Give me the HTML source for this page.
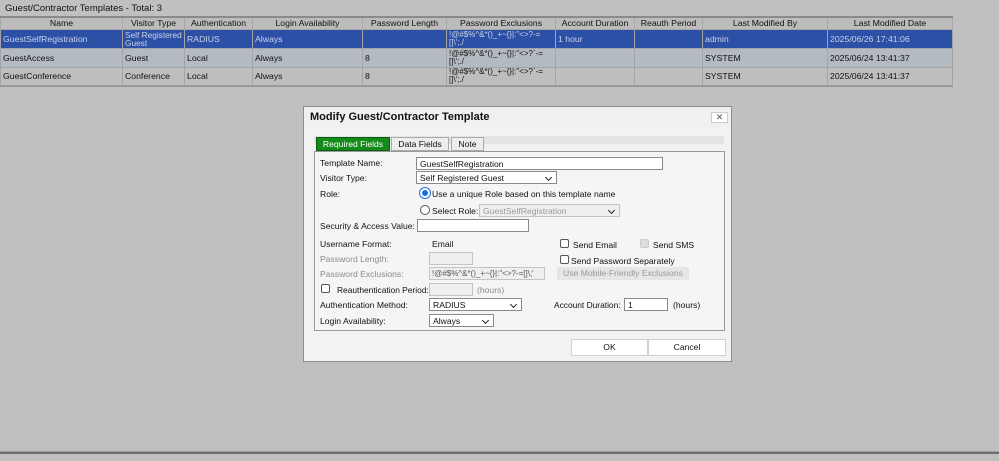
<!DOCTYPE html>
<html><head><style>
*{box-sizing:border-box;margin:0;padding:0}
body{width:999px;height:461px;background:#c0c0c0;font-family:"Liberation Sans",Arial,sans-serif;font-size:9px;color:#111;position:relative;overflow:hidden}
.a{position:absolute;white-space:nowrap}
table{position:absolute;left:0;top:16px;border-collapse:collapse;table-layout:fixed;width:952px;border-top:2px solid #8a8a8a;border-bottom:2px solid #9a9a9a}
td,th{border:1px solid #a4a4a4;font-weight:normal;padding:0 2px;text-align:left;vertical-align:middle;line-height:8px;overflow:hidden;white-space:nowrap;font-size:8.7px}
th{background:#bcbcbc;text-align:center;height:12px;border-color:#a8a8a8;line-height:10px}
tr.s td{background:#2c50a6;color:#c9d3ea}
tr.g td{background:#b4bac2}
tr.h td{background:#bebebe}
tr.s,tr.g,tr.h{height:19px}
.ex{font-size:8px;line-height:8px}
.dlg{position:absolute;left:303px;top:106px;width:429px;height:256px;background:#f2f2f2;border:1px solid #8e8e8e;font-size:8.6px}
.inp{position:absolute;background:#fff;border:1px solid #8a8a8a;height:13px;padding:1px 3px;line-height:10px;white-space:nowrap;overflow:hidden}
.dis{background:#efefef;border-color:#c4c4c4;color:#888}
.sel:after{content:"";position:absolute;right:5px;top:3px;width:4px;height:4px;border-right:1.5px solid #222;border-bottom:1.5px solid #222;transform:rotate(45deg)}
.cb{position:absolute;width:9px;height:9px;border:1px solid #555;background:#fff;border-radius:2px}
.gr{color:#8a8a8a}
.btn{position:absolute;background:#fff;border:1px solid #d0d0d0;text-align:center;line-height:15px;height:17px}
</style></head><body>
<div class="a" style="left:5px;top:3px;font-size:9.5px">Guest/Contractor Templates - Total: 3</div>
<table>
<colgroup><col style="width:122px"><col style="width:62px"><col style="width:68px"><col style="width:110px"><col style="width:84px"><col style="width:109px"><col style="width:79px"><col style="width:68px"><col style="width:125px"><col style="width:125px"></colgroup>
<tr><th>Name</th><th>Visitor Type</th><th>Authentication</th><th>Login Availability</th><th>Password Length</th><th>Password Exclusions</th><th>Account Duration</th><th>Reauth Period</th><th>Last Modified By</th><th>Last Modified Date</th></tr>
<tr class="s"><td>GuestSelfRegistration</td><td style="font-size:8.3px">Self Registered<br>Guest</td><td>RADIUS</td><td>Always</td><td></td><td class="ex">!@#$%^&amp;*()_+~{}|:"&lt;&gt;?-=<br>[]\';./</td><td>1 hour</td><td></td><td>admin</td><td>2025/06/26 17:41:06</td></tr>
<tr class="g"><td>GuestAccess</td><td>Guest</td><td>Local</td><td>Always</td><td>8</td><td class="ex">!@#$%^&amp;*()_+~{}|:"&lt;&gt;?`-=<br>[]\';./</td><td></td><td></td><td>SYSTEM</td><td>2025/06/24 13:41:37</td></tr>
<tr class="h"><td>GuestConference</td><td>Conference</td><td>Local</td><td>Always</td><td>8</td><td class="ex">!@#$%^&amp;*()_+~{}|:"&lt;&gt;?`-=<br>[]\';./</td><td></td><td></td><td>SYSTEM</td><td>2025/06/24 13:41:37</td></tr>
</table>
<div class="a" style="left:0;top:452px;width:999px;height:2px;background:#6e6e6e"></div>
<div class="a" style="left:0;top:451px;width:999px;height:1px;background:#9e9e9e"></div>

<div class="dlg">
<div class="a" style="left:0;top:0;width:427px;height:20px;background:#f0f0f0"></div>
<div class="a" style="left:6px;top:4px;font-size:11px;font-weight:bold">Modify Guest/Contractor Template</div>
<div class="a" style="left:407px;top:5px;width:17px;height:11px;background:#fff;border:1px solid #ccc;text-align:center;line-height:9px;font-size:9px;color:#555">✕</div>
<div class="a" style="left:10px;top:29px;width:410px;height:8px;background:#e4e4e4"></div>
<div class="a" style="left:12px;top:30px;width:74px;height:14px;background:#138a1a;border:1px solid #0b5e10;color:#fff;text-align:center;line-height:12px">Required Fields</div>
<div class="a" style="left:87px;top:30px;width:58px;height:14px;background:#ededed;border:1px solid #aaa;text-align:center;line-height:12px">Data Fields</div>
<div class="a" style="left:147px;top:30px;width:33px;height:14px;background:#ededed;border:1px solid #aaa;text-align:center;line-height:12px">Note</div>
<div class="a" style="left:10px;top:44px;width:411px;height:180px;border:1px solid #999;background:#f5f5f5"></div>

<div class="a" style="left:16px;top:51px">Template Name:</div>
<div class="inp" style="left:112px;top:50px;width:247px">GuestSelfRegistration</div>
<div class="a" style="left:16px;top:66px">Visitor Type:</div>
<div class="inp sel" style="left:112px;top:64px;width:141px">Self Registered Guest</div>
<div class="a" style="left:16px;top:82px">Role:</div>
<div class="a" style="left:116px;top:81px;width:10px;height:10px;border-radius:50%;background:#1a6fe0;border:2px solid #fff;box-shadow:0 0 0 1px #1a6fe0"></div>
<div class="a" style="left:128px;top:82px">Use a unique Role based on this template name</div>
<div class="a" style="left:116px;top:98px;width:10px;height:10px;border-radius:50%;border:1px solid #555;background:#fff"></div>
<div class="a" style="left:128px;top:99px">Select Role:</div>
<div class="inp sel dis" style="left:175px;top:97px;width:141px;color:#999">GuestSelfRegistration</div>
<div class="a" style="left:16px;top:114px">Security &amp; Access Value:</div>
<div class="inp" style="left:113px;top:112px;width:112px"></div>
<div class="a" style="left:16px;top:132px">Username Format:</div>
<div class="a" style="left:128px;top:132px">Email</div>
<div class="cb" style="left:256px;top:132px"></div>
<div class="a" style="left:269px;top:133px">Send Email</div>
<div class="cb" style="left:336px;top:132px;background:#ddd;border-color:#ccc"></div>
<div class="a" style="left:349px;top:133px">Send SMS</div>
<div class="a gr" style="left:16px;top:147px">Password Length:</div>
<div class="inp dis" style="left:125px;top:145px;width:44px"></div>
<div class="cb" style="left:256px;top:148px"></div>
<div class="a" style="left:267px;top:149px">Send Password Separately</div>
<div class="a gr" style="left:16px;top:162px">Password Exclusions:</div>
<div class="inp dis" style="left:125px;top:160px;width:116px;color:#555;font-size:8px;padding:1px 2px">!@#$%^&amp;*()_+~{}|:"&lt;&gt;?-=[]\;'</div>
<div class="a" style="left:253px;top:160px;width:132px;height:13px;background:#e6e6e6;color:#999;text-align:center;line-height:13px">Use Mobile-Friendly Exclusions</div>
<div class="cb" style="left:17px;top:177px"></div>
<div class="a" style="left:33px;top:178px;font-size:8.4px">Reauthentication Period:</div>
<div class="inp dis" style="left:125px;top:176px;width:44px"></div>
<div class="a gr" style="left:173px;top:178px">(hours)</div>
<div class="a" style="left:16px;top:193px">Authentication Method:</div>
<div class="inp sel" style="left:125px;top:191px;width:93px">RADIUS</div>
<div class="a" style="left:250px;top:193px;font-size:8.4px">Account Duration:</div>
<div class="inp" style="left:320px;top:191px;width:44px">1</div>
<div class="a" style="left:369px;top:193px">(hours)</div>
<div class="a" style="left:16px;top:209px">Login Availability:</div>
<div class="inp sel" style="left:125px;top:207px;width:65px">Always</div>
<div class="btn" style="left:267px;top:232px;width:77px">OK</div>
<div class="btn" style="left:344px;top:232px;width:78px">Cancel</div>
</div>
</body></html>
